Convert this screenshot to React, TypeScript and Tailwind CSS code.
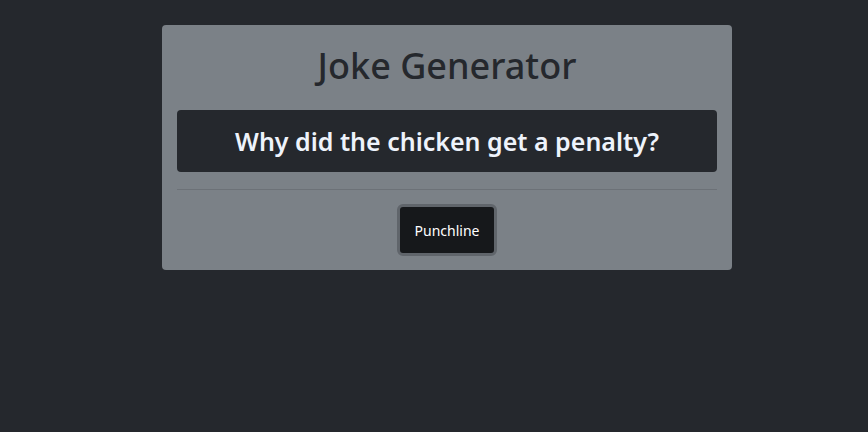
export default function App() {
  return (
    <div className="min-h-[432px] w-full bg-[#25282d] pt-[25px]" style={{ fontFamily: '"Noto Sans", "Open Sans", sans-serif' }}>
      <div className="ml-[162px] w-[570px] rounded-[4px] bg-[#7b8187] px-[15px] pt-[19px] pb-[14px]">
        <h1 className="text-center text-[36px] font-medium leading-[1.2] text-[#25282d]">Joke Generator</h1>
        <div className="mt-[23px] flex h-[62px] items-center justify-center rounded-[4px] bg-[#25282d]">
          <h3 className="text-[25px] font-semibold leading-[1.2] text-[#eef3fb]">Why did the chicken get a penalty?</h3>
        </div>
        <div className="mt-[17px] h-px bg-[#6c7177]" />
        <div className="mt-[14px] flex justify-center">
          <button className="box-border h-[52px] w-[100px] rounded-[6px] border-[3px] border-[#60656b] bg-[#16181b] text-[14px] text-white">
            Punchline
          </button>
        </div>
      </div>
    </div>
  );
}
